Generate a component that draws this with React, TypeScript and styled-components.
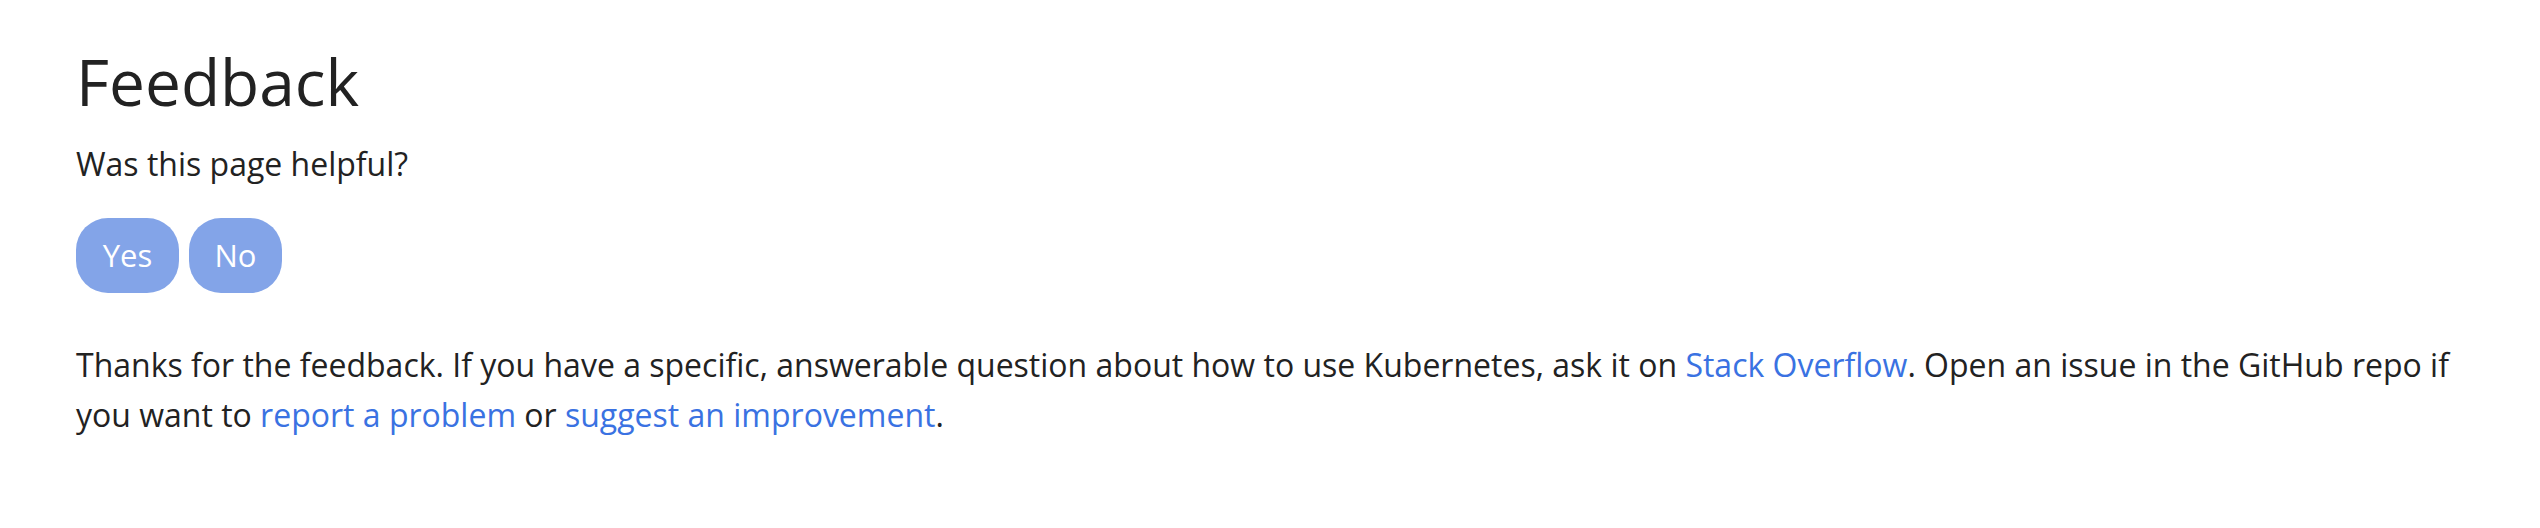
import React from "react";
import styled, { createGlobalStyle } from "styled-components";

const GlobalStyle = createGlobalStyle`
  html, body {
    margin: 0;
    padding: 0;
    background: #ffffff;
  }
  body {
    font-family: "Open Sans", "Noto Sans", "DejaVu Sans", sans-serif;
    color: #222222;
  }
`;

const Section = styled.section`
  display: flex;
  flex-direction: column;
  align-items: flex-start;
  padding: 44px 80px 0 76px;
`;

const Heading = styled.h2`
  margin: 0;
  font-size: 64px;
  font-weight: 400;
  line-height: 1.2;
  color: #222222;
`;

const Question = styled.p`
  margin: 19px 0 0 0;
  font-size: 32px;
  line-height: 48px;
`;

const ButtonRow = styled.div`
  display: flex;
  gap: 10px;
  margin-top: 30px;
`;

const VoteButton = styled.button<{ $w: number }>`
  width: ${(p) => p.$w}px;
  height: 75px;
  border: none;
  border-radius: 32px;
  background: #83a4e8;
  color: #ffffff;
  font-family: "Open Sans", "Noto Sans", sans-serif;
  font-size: 31px;
  line-height: 1;
  padding: 0;
  display: flex;
  align-items: center;
  justify-content: center;
  cursor: pointer;
`;

const Response = styled.p`
  margin: 47px 0 0 0;
  font-size: 32px;
  line-height: 50px;
`;

const Link = styled.a`
  color: #3a72e2;
  text-decoration: none;
`;

export default function App() {
  return (
    <>
      <GlobalStyle />
      <Section>
        <Heading>Feedback</Heading>
        <Question>Was this page helpful?</Question>
        <ButtonRow>
          <VoteButton $w={103}>Yes</VoteButton>
          <VoteButton $w={93}>No</VoteButton>
        </ButtonRow>
        <Response>
          Thanks for the feedback. If you have a specific, answerable question
          about how to use Kubernetes, ask it on{" "}
          <Link href="#">Stack Overflow</Link>. Open an issue in the GitHub repo
          if you want to <Link href="#">report a problem</Link> or{" "}
          <Link href="#">suggest an improvement</Link>.
        </Response>
      </Section>
    </>
  );
}
